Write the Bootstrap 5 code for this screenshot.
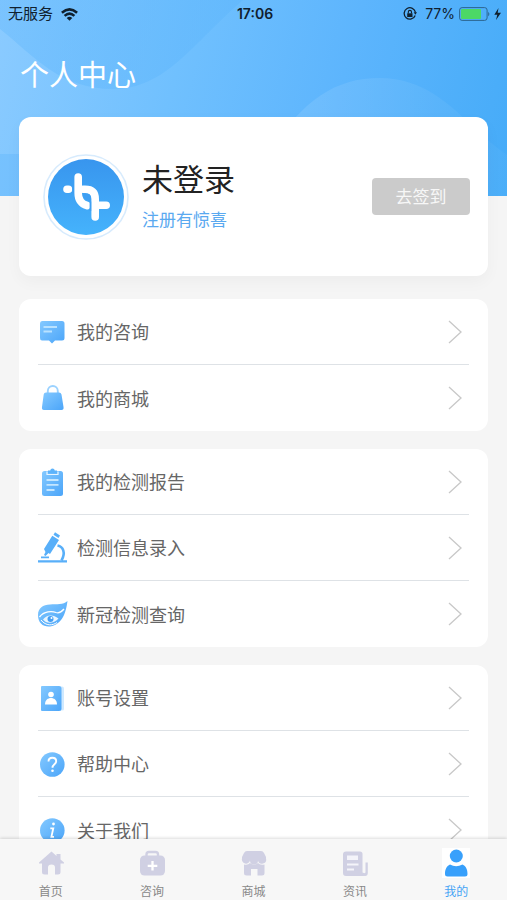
<!DOCTYPE html>
<html lang="zh-CN">
<head>
<meta charset="utf-8">
<meta name="viewport" content="width=device-width, initial-scale=1">
<title>个人中心</title>
<link href="https://cdn.jsdelivr.net/npm/bootstrap@5.3.0/dist/css/bootstrap.min.css" rel="stylesheet">
<style>
body { font-family: "Liberation Sans", "Noto Sans CJK SC", sans-serif; background: #f5f5f5; color: #666; }
.screen-body { min-height: 0; scrollbar-width: none; }
.screen-body::-webkit-scrollbar { display: none; }
.hero { background: linear-gradient(105deg, #8bcbff 0%, #70c0fe 35%, #5db5fd 65%, #45abf8 100%); height: 196px; }
.hero-art { position: absolute; inset: 0; width: 100%; height: 100%; }
.status-bar { height: 28px; padding: 0 5px 0 8px; font-size: 14px; line-height: 28px; color: #10202e; font-family: Inter, "Noto Sans CJK SC", sans-serif; }
.status-bar .carrier { font-size: 15px; }
.status-bar .clock { font-weight: 600; }
.page-title { font-size: 29px; line-height: 40px; font-weight: 400; color: #fff; padding: 28px 20px 0; margin: 0; }
.panel { border-radius: 12px; background: #fff; margin: 0 19px 18px; }
.profile { margin-top: -79px; margin-bottom: 23px; height: 159px; padding: 0 18px 0 24px; gap: 13px; box-shadow: 0 6px 16px rgba(0,0,0,.035); }
.user-name { font-size: 31px; line-height: 40px; font-weight: 400; color: #222; margin: 0; }
.promo { font-size: 17px; line-height: 24px; color: #5aa9f0; margin-top: 8px; }
.sign-btn, .sign-btn:hover { width: 98px; height: 37px; border-radius: 4px; background: #cbcbcb; color: #f7f7f7; font-size: 17px; line-height: 24px; border: 0; padding: 2px 0 0; }
.menu { padding: 0 19px; }
.menu-row { height: 66px; padding: 0 7px 0 0; gap: 11px; font-size: 18px; line-height: 28px; color: #666; border-color: #dcdcdc; }
.menu-row span { padding-top: 3px; }
.menu-row > svg { flex-shrink: 0; overflow: visible; }
.tabs { background: #f7f7f7; height: 61px; box-shadow: 0 -1px 3px rgba(0,0,0,.14); padding-top: 9px; z-index: 2; }
.tab { flex: 1 1 0; font-size: 12px; line-height: 18px; color: #888; gap: 5px; }
.tab.current { color: #45a3f5; }
.tab svg { color: #d0d0e3; }
.tab.current svg { color: #38a0fb; background: #fff; }
</style>
</head>
<body>
<svg width="0" height="0" class="position-absolute" aria-hidden="true">
  <defs>
    <linearGradient id="blue" x1="0" y1="0" x2="1" y2="1"><stop offset="0" stop-color="#84c9ff"/><stop offset="1" stop-color="#4ba5f9"/></linearGradient>
    <linearGradient id="logo" x1="0" y1="0" x2="0" y2="1"><stop offset="0" stop-color="#3895ee"/><stop offset="1" stop-color="#45b3fc"/></linearGradient>
    <symbol id="chevron" viewBox="0 0 14 24"><path d="M1 1 13 12 1 23" fill="none" stroke="#c8c8c8" stroke-width="1.3"/></symbol>
  </defs>
</svg>
<div class="d-flex flex-column vh-100 overflow-hidden">
  <main class="screen-body flex-grow-1 overflow-auto">
    <header class="hero position-relative">
      <svg class="hero-art" viewBox="0 0 507 196" preserveAspectRatio="none" aria-hidden="true">
        <defs>
          <linearGradient id="bowl" x1="0" y1="0" x2="1" y2="0"><stop offset="0" stop-color="#5cb5fc" stop-opacity=".35"/><stop offset="1" stop-color="#5cb5fc" stop-opacity=".45"/></linearGradient>
          <linearGradient id="hill" x1="0" y1="0" x2="1" y2="0"><stop offset="0" stop-color="#fff" stop-opacity=".11"/><stop offset="1" stop-color="#fff" stop-opacity=".03"/></linearGradient>
        </defs>
        <path d="M0 29C35 57 60 89 113 89 166 89 192 44 243 0H0Z" fill="url(#bowl)"/>
        <path d="M270 150C304 100 335 78 380 78 422 78 450 104 474 128 486 139 496 147 507 155V196H270Z" fill="url(#hill)"/>
        <path d="M0 154H30V196H0Z" fill="#5cb5fc" opacity=".35"/>
      </svg>
      <div class="status-bar position-relative d-flex align-items-center">
        <div class="col d-flex align-items-center gap-2">
          <span class="carrier">无服务</span>
          <svg width="17" height="13" viewBox="0 0 17 13" fill="none" stroke="currentColor" stroke-width="2.6" role="img" aria-label="Wi-Fi"><path d="M.9 4.700Q8.500-1.800 16.100 4.700M3.600 7.900Q8.500 3.500 13.400 7.900"/><path d="M5.700 10Q8.500 7.700 11.300 10L8.500 12.800Z" fill="currentColor" stroke="none"/></svg>
        </div>
        <span class="clock">17:06</span>
        <div class="col d-flex align-items-center justify-content-end">
          <svg class="me-2" width="14" height="14" viewBox="0 0 14 14" fill="none" stroke="currentColor" aria-hidden="true"><path d="M12.200 8.500A5.700 5.700 0 1 1 12.500 5.500" stroke-width="1.300"/><path d="M10.700 5.200H14L12.400 7.700Z" fill="currentColor" stroke="none"/><path d="M4.200 6.300H9.500V10H4.200Z" fill="currentColor" stroke="none"/><path d="M5.300 6.500V5a1.600 1.600 0 0 1 3.200 0v1.500" stroke-width="1.100"/></svg>
          <span>77%</span>
          <svg class="ms-1" width="43" height="14" viewBox="0 0 43 14" aria-hidden="true"><rect x=".6" y=".6" width="27.500" height="12.800" rx="2.500" fill="none" stroke="#2c6590"/><rect x="2" y="2" width="20" height="10" rx="1" fill="#4cd866"/><path d="M29.200 4.700q2.400 2.300 0 4.600Z" fill="#2c6590"/><path d="M39.500 1 35.300 7.700H38.300L37 13 42 5.800H38.700Z" fill="#10202e"/></svg>
        </div>
      </div>
      <h1 class="page-title position-relative">个人中心</h1>
    </header>

    <section class="panel profile position-relative d-flex align-items-center">
      <svg width="86" height="86" viewBox="0 0 86 86" class="flex-shrink-0" role="img" aria-label="头像">
        <circle cx="43" cy="43" r="42" fill="#fff" stroke="#d7ebfd" stroke-width="1.600"/>
        <circle cx="43" cy="43" r="38" fill="url(#logo)"/>
        <g fill="none" stroke="#fff" stroke-width="7.600" stroke-linecap="round">
          <path d="M35.200 23V39Q35.200 49 44 51.500" />
          <path d="M40 35.200H42Q52.200 35.200 52.200 45V63"/>
          <path d="M24 35.200H25.500M54 51.200H63.200"/>
        </g>
        <path d="M30 31V39.500M47.400 47.500V57" stroke="#3e9ff3" stroke-width="1.600"/>
        <path d="M39.700 39.500H43Q47.800 39.500 47.800 43.500V47.300Q39.700 46 39.700 39.500Z" fill="#3e9ff3"/>
      </svg>
      <div class="flex-grow-1">
        <h2 class="user-name">未登录</h2>
        <div class="promo">注册有惊喜</div>
      </div>
      <button type="button" class="sign-btn">去签到</button>
    </section>

    <nav class="panel menu" aria-label="我的服务">
      <a href="#consult" class="menu-row d-flex align-items-center text-decoration-none border-bottom">
        <svg width="28" height="32" viewBox="0 0 28 32"><path d="M4 5H24Q26.500 5 26.500 7.500V22Q26.500 24.500 24 24.500H17L14 27.500 11 24.500H4Q2 24.500 2 22V7.500Q2 5 4 5Z" fill="url(#blue)"/><path d="M5.500 11H19M5.500 15.500H14" stroke="#b9e2ff" stroke-width="2"/></svg>
        <span class="flex-grow-1">我的咨询</span><svg width="14" height="24"><use href="#chevron"/></svg></a>
      <a href="#shop" class="menu-row d-flex align-items-center text-decoration-none">
        <svg width="28" height="32" viewBox="0 0 28 32"><path d="M9.800 12V9a5 5 0 0 1 10 0V12" fill="none" stroke="#9bd2ff" stroke-width="1.900"/><path d="M8 10.500H21Q23 10.500 23.500 12.500L25.500 25Q26 28 23.500 28H6Q3.500 28 4 25L5.700 12.500Q6 10.500 8 10.500Z" fill="url(#blue)"/></svg>
        <span class="flex-grow-1">我的商城</span><svg width="14" height="24"><use href="#chevron"/></svg></a>
    </nav>

    <nav class="panel menu" aria-label="检测">
      <a href="#report" class="menu-row d-flex align-items-center text-decoration-none border-bottom">
        <svg width="28" height="32" viewBox="0 0 28 32"><rect x="4" y="5" width="21" height="25" rx="2.500" fill="url(#blue)"/><path d="M9 5.500V8.500H20V5.500" fill="none" stroke="#e8f5ff" stroke-width="1.200"/><path d="M10 4.500H12.200Q12.500 2.500 14.500 2.500T16.800 4.500H19V7.500H10Z" fill="#5db3fb"/><path d="M8.500 14H20.500M8.500 18.800H20.500M8.500 24H16.500" stroke="#c4e6ff" stroke-width="1.800"/></svg>
        <span class="flex-grow-1">我的检测报告</span><svg width="14" height="24"><use href="#chevron"/></svg></a>
      <a href="#entry" class="menu-row d-flex align-items-center text-decoration-none border-bottom">
        <svg width="28" height="32" viewBox="0 0 28 32" fill="#58aff9"><path d="M0 28.200H29V30.500H0ZM3 24.500H11V26.300H3Z"/><path d="M14.300 3.800 21 8 12 22 10.500 21 7.500 24 6 23 7.500 20 6 17Z"/><path d="M17 .3 22 3.500 20.500 6 15.500 2.800Z"/><path d="M19.500 13.500C25 14.500 28 20.500 23.500 28.500" fill="none" stroke="#58aff9" stroke-width="2.600"/></svg>
        <span class="flex-grow-1">检测信息录入</span><svg width="14" height="24"><use href="#chevron"/></svg></a>
      <a href="#covid" class="menu-row d-flex align-items-center text-decoration-none">
        <svg width="28" height="32" viewBox="0 0 28 32"><path d="M29.500 3C28 14 25 26 12 28.500 5 29 0 25 0 17 0 10 5 6.800 12 6.500 19 6 25 7 29.500 3Z" fill="url(#blue)"/><path d="M1.500 19C6 13 14 13 18 14.500 21 15.500 23.500 14 26 11" fill="none" stroke="#fff" stroke-width="1.300"/><path d="M5 21.500C9 16.500 15 16.500 20.500 20.500 15 26.500 8 25.500 5 21.500Z" fill="#eaf6ff"/><path d="M3 22C8 28.500 15 27.500 19 24.500" fill="none" stroke="#fff" stroke-width="1"/><circle cx="12.500" cy="21" r="3" fill="#469ff4"/><circle cx="13.500" cy="20" r="1" fill="#fff"/></svg>
        <span class="flex-grow-1">新冠检测查询</span><svg width="14" height="24"><use href="#chevron"/></svg></a>
    </nav>

    <nav class="panel menu" aria-label="设置">
      <a href="#account" class="menu-row d-flex align-items-center text-decoration-none border-bottom">
        <svg width="28" height="32" viewBox="0 0 28 32"><path d="M22 4.500h2q2 0 2 2V27q0 1.500-2 1.500h-2Z" fill="#cfe9ff"/><path d="M4 4H21Q23.500 4 23.500 6.500V26.500Q23.500 29 21 29H4Q3 29 3 28V5Q3 4 4 4Z" fill="url(#blue)"/><circle cx="13" cy="12.500" r="2.800" fill="#fff"/><path d="M7 22.500C7 18 10 16 13 16S19 18 19 22.500Z" fill="#fff"/></svg>
        <span class="flex-grow-1">账号设置</span><svg width="14" height="24"><use href="#chevron"/></svg></a>
      <a href="#help" class="menu-row d-flex align-items-center text-decoration-none border-bottom">
        <svg width="28" height="32" viewBox="0 0 28 32"><circle cx="14.300" cy="16.500" r="12.300" fill="url(#blue)"/><path d="M10.500 13.500c0-2.500 1.600-3.700 3.800-3.700s3.900 1.400 3.900 3.500c0 3-3.700 3-3.700 6.400" fill="none" stroke="#fff" stroke-width="1.900"/><circle cx="14.500" cy="22.700" r="1.300" fill="#fff"/></svg>
        <span class="flex-grow-1">帮助中心</span><svg width="14" height="24"><use href="#chevron"/></svg></a>
      <a href="#about" class="menu-row d-flex align-items-center text-decoration-none">
        <svg width="28" height="32" viewBox="0 0 28 32"><circle cx="14.300" cy="16.500" r="12.300" fill="url(#blue)"/><circle cx="15.500" cy="10" r="1.400" fill="#fff"/><path d="M12.300 14.300H15.300L13.400 22.800H16" fill="none" stroke="#fff" stroke-width="1.800"/></svg>
        <span class="flex-grow-1">关于我们</span><svg width="14" height="24"><use href="#chevron"/></svg></a>
    </nav>
  </main>

  <nav class="tabs d-flex flex-shrink-0 align-items-start position-relative" aria-label="主导航">
    <a href="#home" class="tab d-flex flex-column align-items-center text-decoration-none"><svg width="28" height="30" viewBox="0 0 28 30" fill="currentColor"><path d="M14.500 3.500 2 14.500V15.500H5V24Q5 26.500 7.500 26.500H11V19.500Q11 16.500 14.500 16.500T18 19.500V26.500H21Q23.500 26.500 23.500 24V15.500H27V14.500L23.500 11.500V6H19.500V8Z"/></svg>首页</a>
    <a href="#ask" class="tab d-flex flex-column align-items-center text-decoration-none"><svg width="28" height="30" viewBox="0 0 28 30" fill="currentColor"><path d="M8.500 9V6.500Q8.500 4 11 4H17.500Q20 4 20 6.500V9" fill="none" stroke="currentColor" stroke-width="2.400"/><rect x="2" y="7.500" width="25" height="20" rx="4.500"/><path d="M14.500 13V22.500M9.700 17.800H19.300" stroke="#fff" stroke-width="2.300"/></svg>咨询</a>
    <a href="#mall" class="tab d-flex flex-column align-items-center text-decoration-none"><svg width="28" height="30" viewBox="0 0 28 30" fill="currentColor"><path d="M7 3H21Q23 3 24 5L26 9V10.500A4 4 0 0 1 18 12.500 4 4 0 0 1 10 12.500 4 4 0 0 1 2 10.500V9L4 5Q5 3 7 3Z"/><path d="M4 16.500Q8 17.500 10 15 14 18 18 15 20 17.500 24.500 16.500V25Q24.500 27.500 22 27.500H17.500V21H11V27.500H6.500Q4 27.500 4 25Z"/></svg>商城</a>
    <a href="#news" class="tab d-flex flex-column align-items-center text-decoration-none"><svg width="28" height="30" viewBox="0 0 28 30" fill="currentColor"><path d="M5 3.500H19Q21.500 3.500 21.500 6V24Q21.500 28 25 28H5Q2 28 2 25V6.500Q2 3.500 5 3.500Z"/><path d="M24.500 14.500H26.800V25Q26.800 28 24 28 21 28 21 24.500L23 25Q24.500 25.500 24.500 24Z"/><path d="M6 7.500H17V12H6Z" fill="#f4f4fa"/><path d="M6 16.500H17.500M6 21.500H13" stroke="#f4f4fa" stroke-width="2"/></svg>资讯</a>
    <a href="#me" class="tab current d-flex flex-column align-items-center text-decoration-none" aria-current="page"><svg width="28" height="30" viewBox="0 0 28 30" fill="currentColor"><circle cx="14.300" cy="8" r="6.500"/><path d="M8 16.500Q14 20 20.500 16.500C24 18 25.500 21.500 25.500 26Q25.500 28.500 23 28.500H5.500Q3 28.500 3 26C3 21.500 4.500 18 8 16.500Z"/></svg>我的</a>
  </nav>
</div>
<script src="https://cdn.jsdelivr.net/npm/bootstrap@5.3.0/dist/js/bootstrap.bundle.min.js"></script>
</body>
</html>
